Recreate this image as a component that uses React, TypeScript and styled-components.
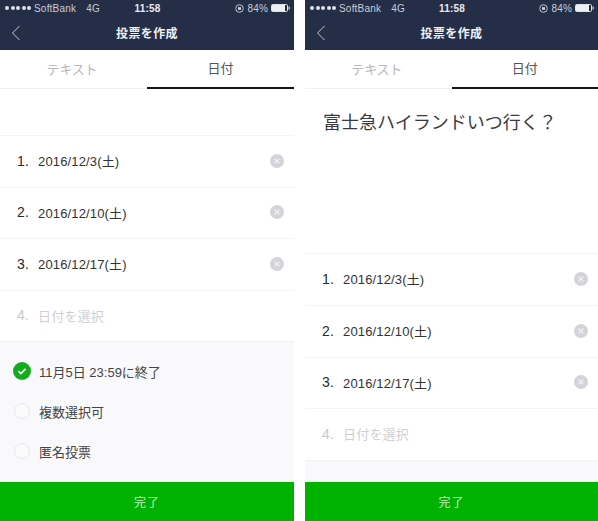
import React from "react";
import styled, { createGlobalStyle } from "styled-components";

const Global = createGlobalStyle`
  html, body { margin: 0; padding: 0; background: #fff; }
  body { font-family: "Liberation Sans", "Noto Sans CJK JP", sans-serif; }
`;
const Page = styled.div`
  display: flex;
  gap: 11px;
  width: 598px;
  height: 521px;
  overflow: hidden;
`;
const Phone = styled.div<{ $w: number }>`
  width: ${(p) => p.$w}px;
  height: 521px;
  display: flex;
  flex-direction: column;
  flex: none;
`;
const Header = styled.div`
  height: 50px;
  background: #242e46;
  color: #e6e8ee;
  display: flex;
  flex-direction: column;
  flex: none;
`;
const Status = styled.div`
  height: 16px;
  padding: 0 4px 0 5px;
  display: grid;
  grid-template-columns: 1fr auto 1fr;
  align-items: center;
  font-size: 10px;
  letter-spacing: 0.2px;
  color: #c9cdd8;
`;
const Carrier = styled.div`
  display: flex;
  align-items: center;
  gap: 2px;
`;
const Dots = styled.span`
  display: flex;
  gap: 1.5px;
  margin-right: 1px;
`;
const Dot = styled.i`
  width: 4px;
  height: 4px;
  border-radius: 50%;
  background: #dfe2e8;
`;
const Net = styled.span`
  margin-left: 8px;
`;
const Time = styled.div`
  font-weight: 700;
  color: #e8eaf0;
`;
const Right = styled.div`
  display: flex;
  align-items: center;
  justify-content: flex-end;
  gap: 3px;
`;
const NavBar = styled.div`
  flex: 1;
  position: relative;
  display: flex;
  align-items: center;
  justify-content: center;
  padding-bottom: 2px;
`;
const Title = styled.div`
  font-size: 12px;
  font-weight: 700;
  letter-spacing: 0.4px;
  color: #eef0f4;
`;
const Back = styled.svg`
  position: absolute;
  left: 11px;
  top: 9px;
`;
const Tabs = styled.div`
  height: 39px;
  display: grid;
  grid-template-columns: 1fr 1fr;
  flex: none;
`;
const Tab = styled.div<{ $active?: boolean }>`
  display: flex;
  align-items: center;
  justify-content: center;
  padding: 0 ${(p) => (p.$active ? 0 : 3)}px 2px 0;
  font-size: 13px;
  letter-spacing: ${(p) => (p.$active ? "0" : "-0.2px")};
  color: ${(p) => (p.$active ? "#555" : "#b8b8b8")};
  box-sizing: border-box;
  border-bottom: ${(p) => (p.$active ? "2px solid #16161c" : "1px solid #f1f1f3")};
`;
const Question = styled.div<{ $h: number }>`
  height: ${(p) => p.$h}px;
  flex: none;
  box-sizing: border-box;
  padding: 21px 18px 0;
  font-size: 18px;
  line-height: 26px;
  letter-spacing: 0;
  color: #3a3a3e;
  border-bottom: 1px solid #f3f3f5;
`;
const Row = styled.div<{ $h: number }>`
  height: ${(p) => p.$h}px;
  flex: none;
  box-sizing: border-box;
  padding: 0 10px 2px 17px;
  display: flex;
  align-items: center;
  border-bottom: 1px solid #f3f3f5;
`;
const Num = styled.span<{ $muted?: boolean }>`
  width: 21px;
  font-size: 14px;
  letter-spacing: 0.3px;
  color: ${(p) => (p.$muted ? "#c8c8cc" : "#2a2a2e")};
`;
const DateText = styled.span<{ $muted?: boolean }>`
  flex: 1;
  font-size: 13px;
  letter-spacing: ${(p) => (p.$muted ? "0.2px" : "0.15px")};
  color: ${(p) => (p.$muted ? "#cfcfd3" : "#333")};
`;
const Options = styled.div`
  flex: 1;
  background: #f9f9fb;
  padding: 9px 0 0 14px;
  display: flex;
  flex-direction: column;
`;
const Option = styled.div`
  height: 40px;
  display: flex;
  align-items: center;
  gap: 9px;
  font-size: 13px;
  letter-spacing: 0;
  color: #444;
`;
const Radio = styled.span`
  width: 16px;
  height: 16px;
  box-sizing: border-box;
  border: 1px solid #e8e8ea;
  border-radius: 50%;
  background: #fbfbfc;
  flex: none;
`;
const Done = styled.div`
  height: 39px;
  flex: none;
  box-sizing: border-box;
  padding-bottom: 1px;
  background: #00b200;
  color: #c8f0c0;
  display: flex;
  align-items: center;
  justify-content: center;
  font-size: 12px;
  letter-spacing: 1px;
`;

const Clear = () => (
  <svg width="14" height="14" viewBox="0 0 14 14">
    <circle cx="7" cy="7" r="7" fill="#d3d4da" />
    <path d="M4.6 4.6l4.8 4.8M9.4 4.6l-4.8 4.8" stroke="#f2f2f5" strokeWidth="1.3" />
  </svg>
);

const Check = () => (
  <svg width="18" height="18" viewBox="0 0 18 18" style={{ flex: "none", marginLeft: -1, marginRight: -1 }}>
    <circle cx="9" cy="9" r="9" fill="#12ab1c" />
    <path d="M5.4 9.2l2.5 2.4 4.6-4.7" stroke="#fff" strokeWidth="1.6" fill="none" />
  </svg>
);

const Battery = () => (
  <svg width="19" height="8" viewBox="0 0 19 8">
    <rect x="0.5" y="0.5" width="16" height="7" rx="1" fill="none" stroke="#dfe2e8" />
    <rect x="1" y="1" width="13" height="6" fill="#eef0f4" />
    <rect x="17.5" y="2.5" width="1.2" height="3" fill="#dfe2e8" />
  </svg>
);

const Lock = () => (
  <svg width="9" height="9" viewBox="0 0 9 9">
    <circle cx="4.5" cy="4.5" r="3.8" fill="none" stroke="#d5d8e0" strokeWidth="0.9" />
    <rect x="3" y="3.2" width="3" height="2.6" fill="#d5d8e0" />
  </svg>
);

const dates = ["2016/12/3(土)", "2016/12/10(土)", "2016/12/17(土)"];

const Screen = ({
  w,
  question,
  qh,
  rows,
  options,
}: {
  w: number;
  question?: string;
  qh: number;
  rows: number[];
  options?: boolean;
}) => (
  <Phone $w={w}>
    <Header>
      <Status>
        <Carrier>
          <Dots>
            {[0, 1, 2, 3, 4].map((i) => (
              <Dot key={i} />
            ))}
          </Dots>
          SoftBank<Net>4G</Net>
        </Carrier>
        <Time>11:58</Time>
        <Right>
          <Lock />
          84%
          <Battery />
        </Right>
      </Status>
      <NavBar>
        <Back width="10" height="16" viewBox="0 0 10 16">
          <path d="M8.5 1L1.5 8l7 7" fill="none" stroke="#c4c8d2" strokeWidth="1" />
        </Back>
        <Title>投票を作成</Title>
      </NavBar>
    </Header>
    <Tabs>
      <Tab>テキスト</Tab>
      <Tab $active>日付</Tab>
    </Tabs>
    <Question $h={qh}>{question}</Question>
    {dates.map((d, i) => (
      <Row key={d} $h={rows[i]}>
        <Num>{i + 1}.</Num>
        <DateText>{d}</DateText>
        <Clear />
      </Row>
    ))}
    <Row $h={rows[3]}>
      <Num $muted>4.</Num>
      <DateText $muted>日付を選択</DateText>
    </Row>
    <Options>
      {options && (
        <>
          <Option>
            <Check />
            11月5日 23:59に終了
          </Option>
          <Option>
            <Radio />
            複数選択可
          </Option>
          <Option>
            <Radio />
            匿名投票
          </Option>
        </>
      )}
    </Options>
    <Done>完了</Done>
  </Phone>
);

export default function App() {
  return (
    <>
      <Global />
      <Page>
        <Screen w={294} qh={47} rows={[52, 51, 52, 51]} options />
        <Screen w={293} qh={165} rows={[52, 52, 51, 52]} question="富士急ハイランドいつ行く？" />
      </Page>
    </>
  );
}
